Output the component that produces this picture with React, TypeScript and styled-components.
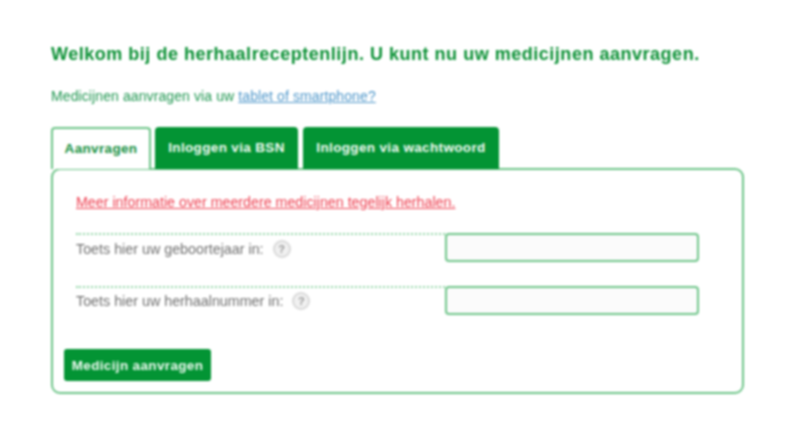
import styled, { createGlobalStyle } from 'styled-components';

const GlobalStyle = createGlobalStyle`
	html, body {
		margin: 0;
		padding: 0;
		background: #fff;
	}
	body {
		font-family: "Liberation Sans", Arial, sans-serif;
	}
`;

const Page = styled.div`
	width: 792px;
	height: 440px;
	box-sizing: border-box;
	padding: 44px 48px 0 51px;
	filter: blur(0.8px);
`;

const Heading = styled.h1`
	margin: 0;
	font-size: 18px;
	line-height: 20px;
	font-weight: bold;
	letter-spacing: 0.52px;
	color: #0a9034;
	white-space: nowrap;
`;

const Intro = styled.p`
	margin: 22px 0 0;
	font-size: 14px;
	line-height: 20px;
	letter-spacing: 0.1px;
	color: #1f9650;
`;

const BlueLink = styled.a`
	color: #4f97ca;
	text-decoration: underline;
`;

const Tabs = styled.div`
	display: flex;
	margin-top: 21px;
	position: relative;
	z-index: 1;
`;

const Tab = styled.div<{ $active?: boolean; $width: number; $gap: number }>`
	box-sizing: border-box;
	width: ${(p) => p.$width}px;
	height: 42px;
	margin-right: ${(p) => p.$gap}px;
	margin-bottom: -1px;
	display: flex;
	align-items: center;
	justify-content: center;
	padding-bottom: 1px;
	font-size: 13.5px;
	font-weight: bold;
	letter-spacing: 0.35px;
	border-radius: 4px 4px 0 0;
	color: ${(p) => (p.$active ? '#148f3e' : '#f2fbf4')};
	background: ${(p) => (p.$active ? '#fff' : '#039434')};
	border: 2px solid ${(p) => (p.$active ? '#6cc487' : '#039434')};
	border-bottom: ${(p) => (p.$active ? 'none' : undefined)};
`;

const Panel = styled.div`
	box-sizing: border-box;
	width: 693px;
	height: 226px;
	padding: 24px 43px 0 11px;
	border: 2px solid #6cc487;
	border-radius: 9px;
	background: #fff;
`;

const InfoLink = styled.a`
	display: block;
	margin-left: 12px;
	font-size: 14.25px;
	line-height: 16px;
	color: #ee3f50;
	text-decoration: underline;
`;

const FormRow = styled.div<{ $top: number }>`
	display: flex;
	margin-top: ${(p) => p.$top}px;
	margin-left: 12px;
	height: 30px;
`;

const LabelCell = styled.div<{ $pad: number }>`
	width: 369px;
	flex: none;
	box-sizing: border-box;
	border-top: 2px dotted #93d6a8;
	padding-top: ${(p) => p.$pad}px;
	display: flex;
	align-items: flex-start;
	gap: 9px;
	font-size: 14.3px;
	line-height: 18px;
	color: #6f6f6f;
`;

const HelpIcon = styled.span`
	width: 18px;
	height: 18px;
	box-sizing: border-box;
	border: 2px solid #d9d9d9;
	border-radius: 50%;
	background: #f1f1f1;
	display: flex;
	align-items: center;
	justify-content: center;
	font-size: 11px;
	font-weight: bold;
	color: #9a9a9a;
`;

const Input = styled.input`
	box-sizing: border-box;
	width: 254px;
	height: 29px;
	margin: 0;
	padding: 0;
	border: 2px solid #6fc58a;
	border-radius: 4px;
	background: #fbfbfb;
	outline: none;
`;

const SubmitButton = styled.button`
	display: block;
	box-sizing: border-box;
	width: 147px;
	height: 32px;
	margin-top: 33px;
	padding: 0;
	border: none;
	border-radius: 3px;
	background: #039434;
	color: #eefaf1;
	font-family: inherit;
	font-size: 13.5px;
	font-weight: bold;
	letter-spacing: 0.35px;
`;

function App() {
	return (
		<Page>
			<GlobalStyle />
			<Heading>Welkom bij de herhaalreceptenlijn. U kunt nu uw medicijnen aanvragen.</Heading>
			<Intro>
				Medicijnen aanvragen via uw <BlueLink>tablet of smartphone?</BlueLink>
			</Intro>
			<Tabs>
				<Tab $active $width={100} $gap={4}>Aanvragen</Tab>
				<Tab $width={143} $gap={5}>Inloggen via BSN</Tab>
				<Tab $width={196} $gap={0}>Inloggen via wachtwoord</Tab>
			</Tabs>
			<Panel>
				<InfoLink>Meer informatie over meerdere medicijnen tegelijk herhalen.</InfoLink>
				<FormRow $top={23}>
					<LabelCell $pad={5}>
						Toets hier uw geboortejaar in: <HelpIcon>?</HelpIcon>
					</LabelCell>
					<Input />
				</FormRow>
				<FormRow $top={23}>
					<LabelCell $pad={4}>
						Toets hier uw herhaalnummer in: <HelpIcon>?</HelpIcon>
					</LabelCell>
					<Input />
				</FormRow>
				<SubmitButton>Medicijn aanvragen</SubmitButton>
			</Panel>
		</Page>
	);
}

export default App;
